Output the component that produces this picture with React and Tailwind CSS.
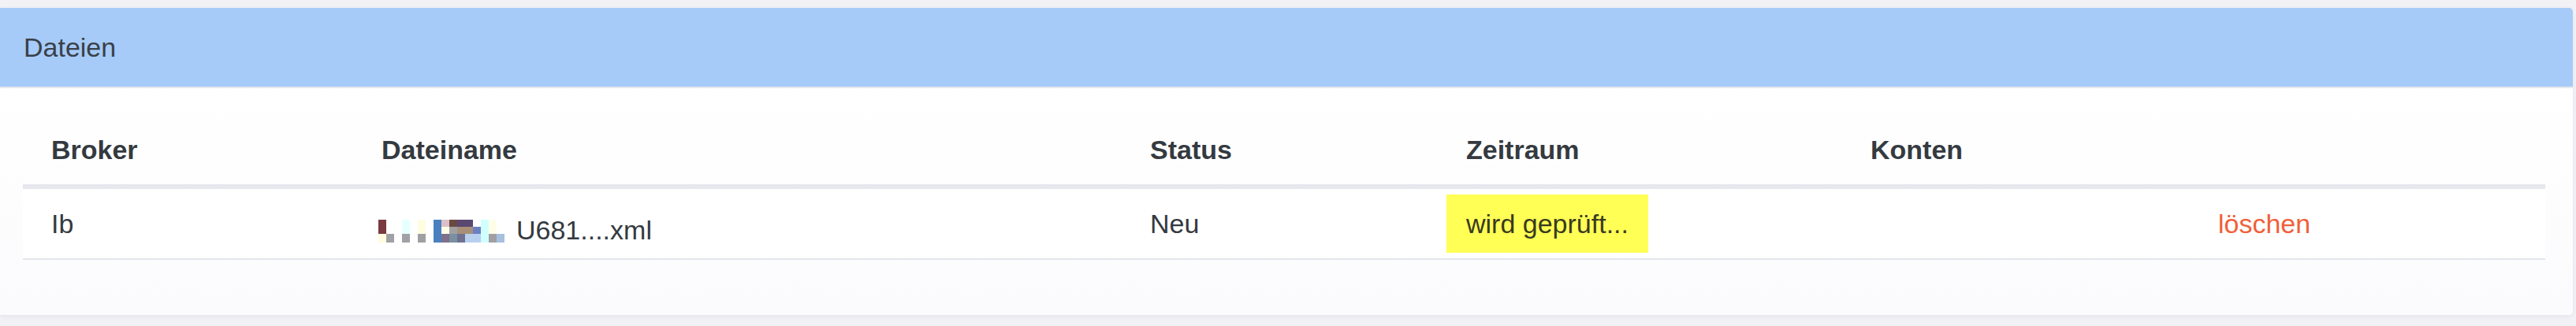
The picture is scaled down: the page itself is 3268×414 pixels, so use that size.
const mosaic = [
  ['#7a3a40', '#7a3a40', '#fffde0'],
  ['#ffffff', '#ffffff', '#a0a0a5'],
  ['#ffffff', '#ffffff', '#ffffff'],
  ['#e6ffff', '#e6ffff', '#a0a0a5'],
  ['#ffffff', '#ffffff', '#ffffff'],
  ['#fffde0', '#fffde0', '#9fa0a4'],
  ['#ffffff', '#ffffff', '#ffffff'],
  ['#4a80c0', '#4a80c0', '#4a80c0'],
  ['#dcc0c8', '#fffde6', '#80708a'],
  ['#6a4a40', '#a0a0a4', '#7890a0'],
  ['#5a4870', '#a89078', '#707090'],
  ['#5a4870', '#a89078', '#b8d0f0'],
  ['#ffffff', '#6a80c0', '#b8d0f0'],
  ['#d0ffff', '#d0ffff', '#d0ffff'],
  ['#fffde8', '#fffde8', '#a0a0a4'],
  ['#ffffff', '#ffffff', '#a8c0e0'],
];

function Blurred() {
  // verpixelter Teil des Dateinamens
  return (
    <span className="inline-flex mt-[2px]">
      {mosaic.map((col, i) => (
        <span key={i} className="flex flex-col w-[10px]">
          {col.map((c, j) => (
            <span
              key={j}
              className={j === 2 ? 'h-[11px]' : 'h-[9px]'}
              style={{ backgroundColor: c }}
            />
          ))}
        </span>
      ))}
    </span>
  );
}

export default function App() {
  return (
    <div className="min-h-screen bg-[#f1f1f6] pt-[10px] pr-[4px] font-['Liberation_Sans',Arial,sans-serif] text-[34px] text-[#343a40]">
      <div className="bg-white rounded-r-[5px] overflow-hidden shadow-[0_2px_6px_rgba(40,40,80,0.06)]">

        {/* Kopf */}
        <div className="h-[102px] bg-[#a6cbf8] pl-[30px] flex items-center border-b-2 border-[#e6e8ee] text-[#3a4048]">
          Dateien
        </div>

        {/* Tabelle */}
        <div className="pt-[34px] pl-[29px] pr-[35px] pb-[70px] bg-gradient-to-b from-white to-[#fbfbfd]">
          <table className="w-full table-fixed border-separate border-spacing-0">
            <colgroup>
              <col className="w-[419px]" />
              <col className="w-[975px]" />
              <col className="w-[401px]" />
              <col className="w-[513px]" />
              <col className="w-[441px]" />
              <col />
            </colgroup>
            <thead>
              <tr className="text-left [&>th]:h-[94px] [&>th]:pl-[36px] [&>th]:border-b-[6px] [&>th]:border-[#e7e7ee] [&>th]:font-bold">
                <th>Broker</th>
                <th>Dateiname</th>
                <th>Status</th>
                <th>Zeitraum</th>
                <th>Konten</th>
                <th />
              </tr>
            </thead>
            <tbody>
              <tr className="bg-white [&>td]:h-[90px] [&>td]:border-b-2 [&>td]:border-[#e3e6ec]">
                <td className="pl-[36px]">Ib</td>
                <td className="pl-[32px]">
                  <span className="inline-flex items-center gap-[15px]">
                    <Blurred />
                    <span>U681....xml</span>
                  </span>
                </td>
                <td className="pl-[36px]">Neu</td>
                <td className="pl-[11px]">
                  <span className="inline-flex items-center h-[74px] px-[25px] bg-[#ffff55] text-[#3a3a20]">
                    wird geprüft...
                  </span>
                </td>
                <td />
                <td className="pl-[36px] text-[#f0603a]">löschen</td>
              </tr>
            </tbody>
          </table>
        </div>
      </div>
    </div>
  );
}
